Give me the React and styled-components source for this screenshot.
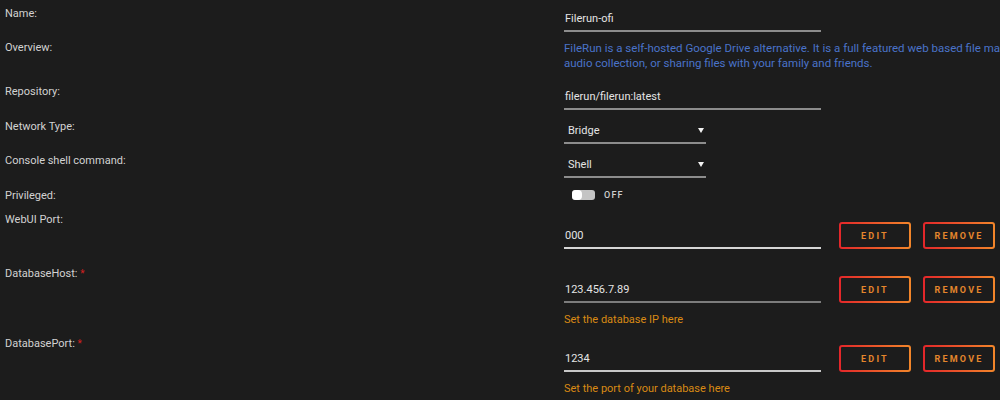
import React from 'react';
import styled, { createGlobalStyle } from 'styled-components';

const GlobalStyle = createGlobalStyle`
    html, body {
        margin: 0;
        padding: 0;
        background: #1c1c1c;
        overflow: hidden;
        font-family: Roboto, "Liberation Sans", sans-serif;
    }
`;

function App() {
    return (
        <>
            <GlobalStyle/>
            <Form>
                <Row $h={34}>
                    <Label>Name:</Label>
                    <Control $top={7}>
                        <TextField $w={256} $line="#8c8c8c">Filerun-ofi</TextField>
                    </Control>
                </Row>

                <Row $h={44}>
                    <Label>Overview:</Label>
                    <Control $top={2}>
                        <Overview>
                            <span>FileRun is a self-hosted Google Drive alternative. It is a full featured web based file manager with an easy to use user interface. Use it for managing your photos, movies,</span>
                            <span>audio collection, or sharing files with your family and friends.</span>
                        </Overview>
                    </Control>
                </Row>

                <Row $h={35}>
                    <Label>Repository:</Label>
                    <Control $top={7}>
                        <TextField $w={256} $line="#8c8c8c">filerun/filerun:latest</TextField>
                    </Control>
                </Row>

                <Row $h={34}>
                    <Label>Network Type:</Label>
                    <Control $top={6}>
                        <Select>Bridge<Arrow/></Select>
                    </Control>
                </Row>

                <Row $h={35}>
                    <Label>Console shell command:</Label>
                    <Control $top={6}>
                        <Select>Shell<Arrow/></Select>
                    </Control>
                </Row>

                <Row $h={24}>
                    <Label>Privileged:</Label>
                    <Control $top={3}>
                        <Toggle>
                            <Track><Knob/></Track>
                            OFF
                        </Toggle>
                    </Control>
                </Row>

                <Row $h={54}>
                    <Label>WebUI Port:</Label>
                    <Control $top={11}>
                        <FieldLine>
                            <TextField $w={256} $line="#d6d6d6" $pad={4}>000</TextField>
                            <Buttons>
                                <Button>EDIT</Button>
                                <Button>REMOVE</Button>
                            </Buttons>
                        </FieldLine>
                    </Control>
                </Row>

                <Row $h={70}>
                    <Label>DatabaseHost: <Required>*</Required></Label>
                    <Control $top={11}>
                        <FieldLine>
                            <TextField $w={256} $line="#7c7c7c" $pad={4}>123.456.7.89</TextField>
                            <Buttons>
                                <Button>EDIT</Button>
                                <Button>REMOVE</Button>
                            </Buttons>
                        </FieldLine>
                        <Hint>Set the database IP here</Hint>
                    </Control>
                </Row>

                <Row $h={64}>
                    <Label>DatabasePort: <Required>*</Required></Label>
                    <Control $top={10}>
                        <FieldLine>
                            <TextField $w={256} $line="#c8c8c8" $pad={4}>1234</TextField>
                            <Buttons>
                                <Button>EDIT</Button>
                                <Button>REMOVE</Button>
                            </Buttons>
                        </FieldLine>
                        <Hint>Set the port of your database here</Hint>
                    </Control>
                </Row>
            </Form>
        </>
    )
}

export default App

export const Form = styled.div`
    display: flex;
    flex-direction: column;
    padding-top: 5px;
    width: 1000px;
`;

export const Row = styled.div`
    display: flex;
    align-items: flex-start;
    height: ${props => props.$h}px;
`;

export const Label = styled.div`
    width: 559px;
    flex-shrink: 0;
    padding-left: 5px;
    font-size: 11px;
    line-height: 18px;
    color: #d2d2d2;
`;

export const Required = styled.span`
    color: #d42020;
    font-size: 10px;
    vertical-align: top;
`;

export const Control = styled.div`
    display: flex;
    flex-direction: column;
    margin-top: ${props => props.$top}px;
`;

export const TextField = styled.div`
    width: ${props => props.$w}px;
    font-size: 11px;
    line-height: 14px;
    padding-top: ${props => props.$pad || 0}px;
    padding-bottom: 4px;
    padding-left: 1px;
    color: #e4e4e4;
    border-bottom: 2px solid ${props => props.$line};
`;

export const Overview = styled.div`
    display: flex;
    flex-direction: column;
    font-size: 11.5px;
    line-height: 15px;
    color: #4a73c9;
    white-space: nowrap;
`;

export const Select = styled.div`
    position: relative;
    width: 138px;
    font-size: 11px;
    line-height: 14px;
    padding: 0 0 4px 4px;
    color: #e4e4e4;
    border-bottom: 2px solid #8c8c8c;
`;

export const Arrow = styled.span`
    position: absolute;
    right: 2px;
    top: 4px;
    width: 0;
    height: 0;
    border-left: 3px solid transparent;
    border-right: 3px solid transparent;
    border-top: 5px solid #f2f2f2;
`;

export const Toggle = styled.div`
    display: flex;
    align-items: center;
    gap: 9px;
    padding-left: 8px;
    font-size: 9px;
    font-weight: 500;
    letter-spacing: 1.2px;
    line-height: 10px;
    color: #cfcfcf;
`;

export const Track = styled.div`
    display: flex;
    align-items: center;
    width: 23px;
    height: 10px;
    border-radius: 3px;
    background: #c4c4c4;
`;

export const Knob = styled.div`
    width: 10px;
    height: 10px;
    border-radius: 4px;
    background: #ffffff;
`;

export const FieldLine = styled.div`
    display: flex;
    align-items: flex-end;
    gap: 18px;
`;

export const Buttons = styled.div`
    display: flex;
    gap: 12px;
`;

export const Button = styled.div`
    display: flex;
    justify-content: center;
    align-items: center;
    box-sizing: border-box;
    width: 72px;
    height: 27px;
    border: 2px solid transparent;
    border-radius: 3px;
    background: linear-gradient(#1c1c1c, #1c1c1c) padding-box,
        linear-gradient(90deg, #e3262a 0%, #f2862a 100%) border-box;
    font-size: 9px;
    font-weight: 700;
    letter-spacing: 2.2px;
    color: #e4862c;
`;

export const Hint = styled.div`
    margin-top: 10px;
    font-size: 11px;
    line-height: 14px;
    color: #d98a14;
`;
